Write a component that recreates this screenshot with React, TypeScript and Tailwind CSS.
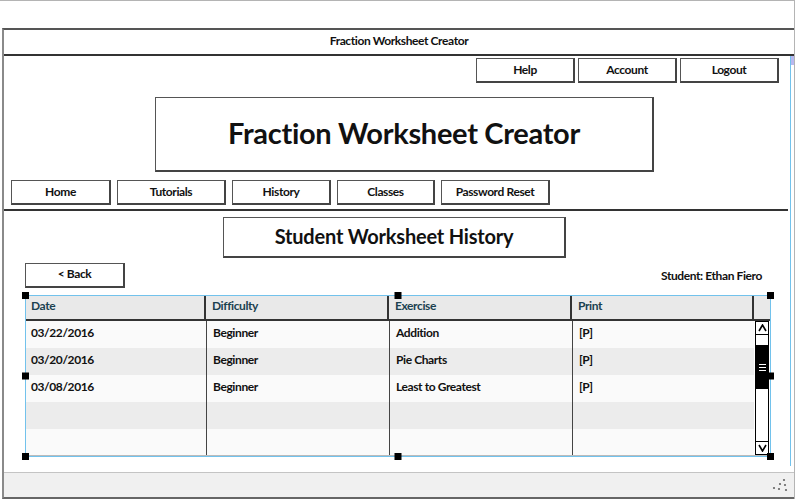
const btn =
  "flex items-center justify-center bg-white border border-[#555] border-r-2 border-b-2 border-r-[#444] border-b-[#444] text-[12px] tracking-[-0.4px] font-bold text-[#111]";

const rows = [
  { date: "03/22/2016", diff: "Beginner", ex: "Addition", print: "[P]" },
  { date: "03/20/2016", diff: "Beginner", ex: "Pie Charts", print: "[P]" },
  { date: "03/08/2016", diff: "Beginner", ex: "Least to Greatest", print: "[P]" },
  { date: "", diff: "", ex: "", print: "" },
  { date: "", diff: "", ex: "", print: "" },
];

const Handle = ({ className }: { className: string }) => (
  <div className={"absolute w-[7px] h-[7px] bg-black " + className} />
);

const ScrollBar = () => (
  <div className="w-[14px] h-full ml-[1px] border-[1.5px] border-black bg-white flex flex-col">
    <div className="h-[13px] border-b-[1.5px] border-black flex items-center justify-center">
      <svg width="9" height="8" viewBox="0 0 9 8">
        <path d="M1 7 L4.5 1 L8 7" fill="none" stroke="black" strokeWidth="1.6" />
      </svg>
    </div>
    <div className="mt-[10px] h-[44px] bg-black flex flex-col items-center justify-center gap-[2px]">
      <div className="w-[7px] h-[1px] bg-white" />
      <div className="w-[7px] h-[1px] bg-white" />
      <div className="w-[7px] h-[1px] bg-white" />
    </div>
    <div className="flex-1" />
    <div className="h-[13px] border-t-[1.5px] border-black flex items-center justify-center">
      <svg width="9" height="8" viewBox="0 0 9 8">
        <path d="M1 1 L4.5 7 L8 1" fill="none" stroke="black" strokeWidth="1.6" />
      </svg>
    </div>
  </div>
);

const HistoryTable = () => (
  <div className="relative ml-[21px] mr-[19px] mt-[7px] h-[162px] border-[1.5px] border-[#72c2ec]">
    <div className="flex flex-col h-full">
      <div className="grid grid-cols-[180px_183px_183px_182px_1fr] h-[25px] bg-[#e9e9e9] border-b-2 border-[#333] text-[12px] tracking-[-0.4px] font-bold text-[#1b4150]">
        <div className="border-r-2 border-[#333] pl-[5px] pb-[3px] flex items-center">Date</div>
        <div className="border-r-2 border-[#333] pl-[6px] pb-[3px] flex items-center">Difficulty</div>
        <div className="border-r-2 border-[#333] pl-[6px] pb-[3px] flex items-center">Exercise</div>
        <div className="border-r-2 border-[#333] pl-[6px] pb-[3px] flex items-center">Print</div>
        <div />
      </div>
      <div className="flex flex-1 border-b border-[#bbb]">
        <div className="flex flex-col w-[728px]">
          {rows.map((r, i) => (
            <div
              key={i}
              className={
                "grid grid-cols-[181px_183px_183px_181px] text-[12px] tracking-[-0.4px] font-bold text-[#111] " +
                (i === 4 ? "flex-1 " : "h-[27px] ") +
                (i % 2 === 0 ? "bg-[#fafafa]" : "bg-[#ececec]")
              }
            >
              <div className="border-r border-[#444] pl-[5px] pb-[3px] flex items-center">{r.date}</div>
              <div className="border-r border-[#444] pl-[6px] pb-[3px] flex items-center">{r.diff}</div>
              <div className="border-r border-[#444] pl-[6px] pb-[3px] flex items-center">{r.ex}</div>
              <div className="pl-[6px] pb-[3px] flex items-center">{r.print}</div>
            </div>
          ))}
        </div>
        <ScrollBar />
      </div>
    </div>
    <Handle className="-left-[4px] -top-[4px]" />
    <Handle className="left-1/2 -translate-x-1/2 -top-[4px]" />
    <Handle className="-right-[4px] -top-[4px]" />
    <Handle className="-left-[4px] top-1/2 -translate-y-1/2" />
    <Handle className="-right-[4px] top-1/2 -translate-y-1/2" />
    <Handle className="-left-[4px] -bottom-[4px]" />
    <Handle className="left-1/2 -translate-x-1/2 -bottom-[4px]" />
    <Handle className="-right-[4px] -bottom-[4px]" />
  </div>
);

const Grip = () => (
  <svg width="18" height="14" viewBox="0 0 18 14">
    <circle cx="13" cy="2" r="1.1" fill="#666" />
    <circle cx="9" cy="6" r="1.1" fill="#666" />
    <circle cx="14" cy="7" r="1.1" fill="#666" />
    <circle cx="3" cy="10" r="1.1" fill="#666" />
    <circle cx="8" cy="11" r="1.1" fill="#666" />
    <circle cx="15" cy="12" r="1.1" fill="#666" />
  </svg>
);

export default function App() {
  return (
    <div className="w-[800px] h-[500px] bg-white overflow-hidden font-['Lato',_'Noto_Sans',_sans-serif]">
      <div className="w-[795px] h-[499px] border-t border-r border-[#b4b4b4] flex flex-col">
        <div className="h-[27px]" />
        <div className="flex-1 ml-[2px] flex flex-col border-t-2 border-[#555] border-l-2 border-l-[#8a8a8a] border-b-2 border-b-[#666]">
          <div className="h-[26px] pb-[2px] border-b-2 border-[#333] flex items-center justify-center text-[12px] tracking-[-0.4px] font-bold text-[#111]">
            Fraction Worksheet Creator
          </div>
          <div className="flex flex-1">
            <div className="flex-1 flex flex-col">
              <div className="flex justify-end gap-[3px] mt-[2px] pr-[11px]">
                <button className={btn + " w-[99px] h-[25px]"}>Help</button>
                <button className={btn + " w-[99px] h-[25px]"}>Account</button>
                <button className={btn + " w-[99px] h-[25px]"}>Logout</button>
              </div>
              <div className="ml-[151px] mt-[14px] w-[499px] h-[75px] pb-[2px] bg-white border border-[#555] border-r-2 border-b-2 border-r-[#444] border-b-[#444] flex items-center justify-center text-[29px] tracking-[-0.3px] font-bold text-[#111]">
                Fraction Worksheet Creator
              </div>
              <div className="flex gap-[6px] ml-[7px] mt-[8px]">
                <button className={btn + " w-[100px] h-[25px]"}>Home</button>
                <button className={btn + " w-[109px] h-[25px]"}>Tutorials</button>
                <button className={btn + " w-[99px] h-[25px]"}>History</button>
                <button className={btn + " w-[98px] h-[25px]"}>Classes</button>
                <button className={btn + " w-[109px] h-[25px]"}>Password Reset</button>
              </div>
              <div className="mt-[4px] mr-[2px] h-[2px] bg-[#333]" />
              <div className="ml-[219px] mt-[6px] w-[343px] h-[41px] pb-[2px] bg-white border border-[#555] border-r-2 border-b-2 border-r-[#444] border-b-[#444] flex items-center justify-center text-[20px] tracking-[-0.2px] font-bold text-[#111]">
                Student Worksheet History
              </div>
              <div className="flex items-end justify-between ml-[21px] mr-[28px] mt-[5px]">
                <button className={btn + " w-[100px] h-[25px] pb-[2px]"}>&lt; Back</button>
                <span className="text-[12px] tracking-[-0.4px] font-bold text-[#111] mb-[3px]">Student: Ethan Fiero</span>
              </div>
              <HistoryTable />
            </div>
            <div className="w-[4px] border-l border-[#72c2ec] relative mb-[6px]">
              <div className="absolute left-0 top-0 w-[3px] h-[9px] bg-[#b8b8f0]" />
            </div>
          </div>
          <div className="h-[25px] border-t border-[#c4c4c4] bg-[#f0f0f0] flex items-center justify-end pr-[5px]">
            <Grip />
          </div>
        </div>
      </div>
    </div>
  );
}
